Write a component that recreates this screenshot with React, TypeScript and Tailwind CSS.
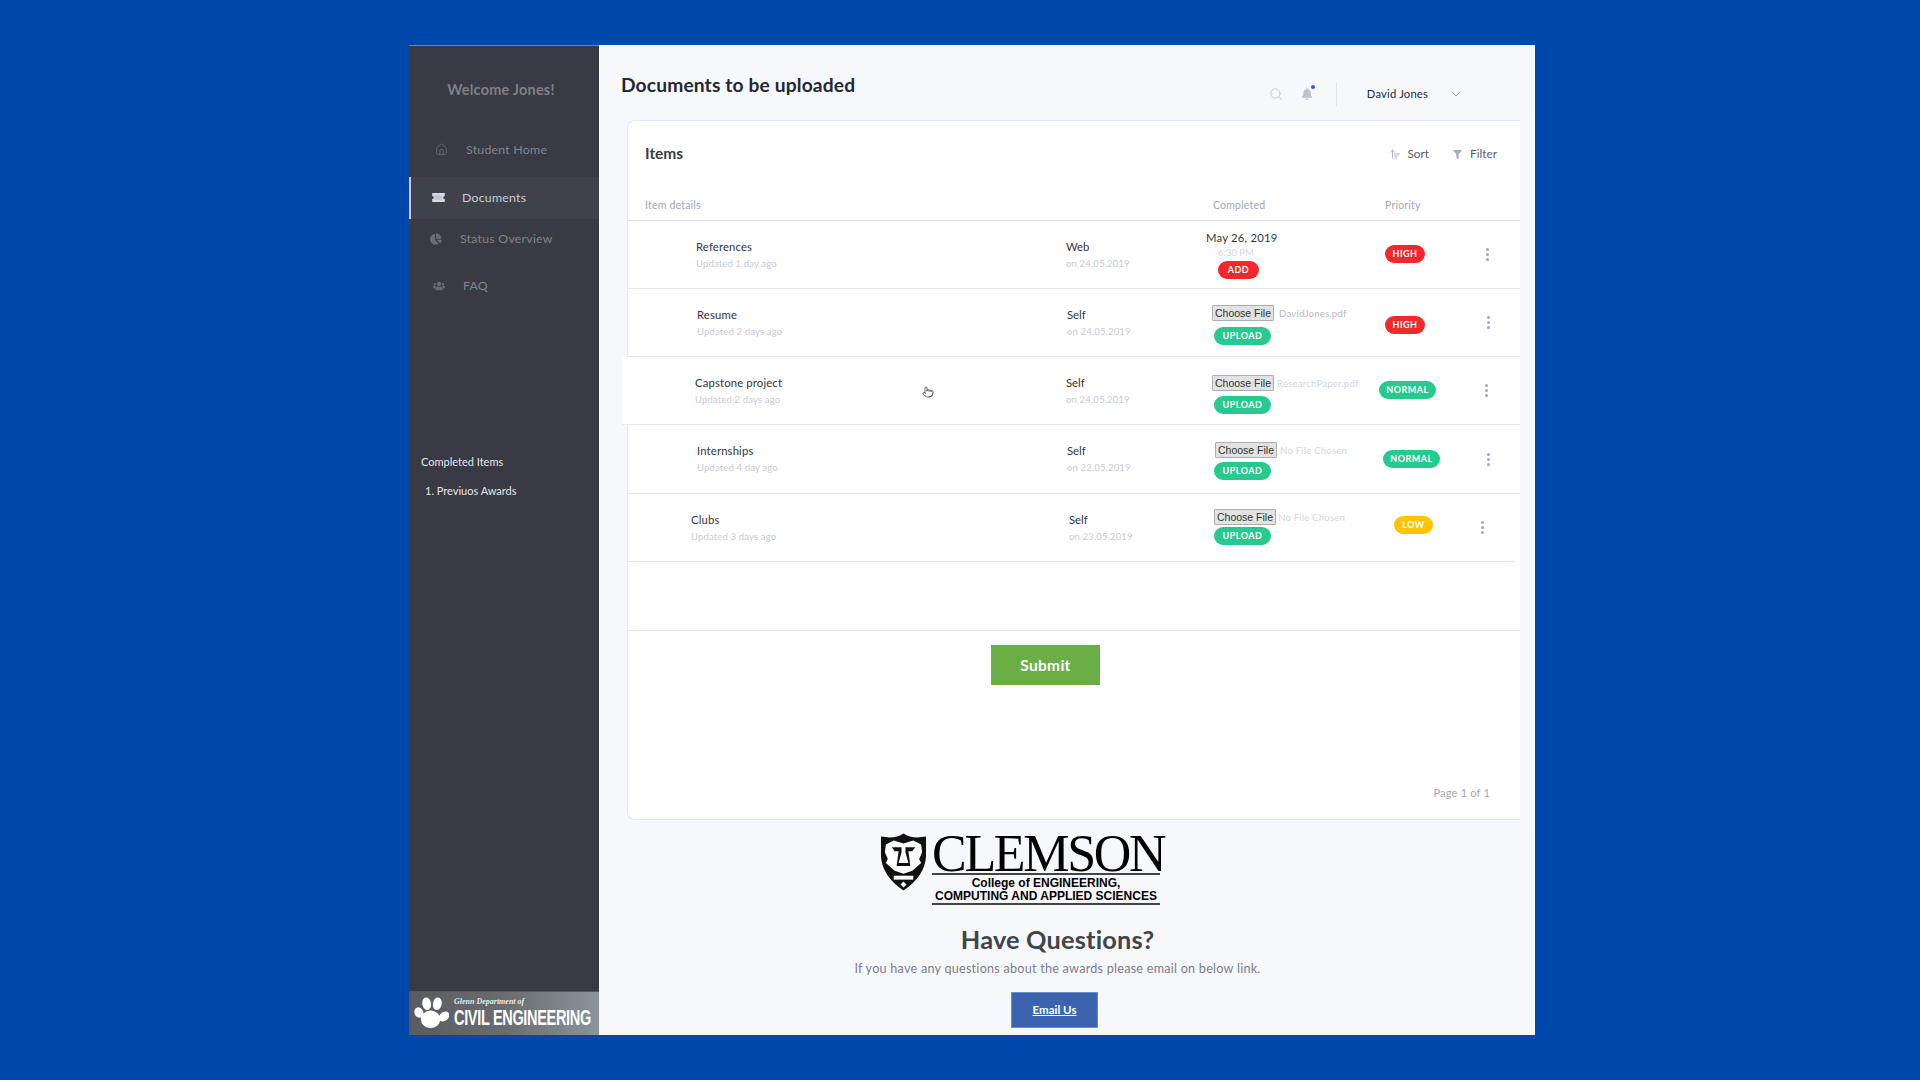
import { House, Search, ChevronDown, ArrowUpWideNarrow, Pointer } from "lucide-react";
import { FaChartPie, FaUsers, FaBell, FaFilter } from "react-icons/fa";

type Row = {
  name: string; sub: string; src: string; on: string;
  rowCls: string; nameCol: string; srcCol: string; midCol: string;
  file?: string; fileCls?: string; chooseCls?: string; uploadCls?: string;
  pri: string; priCls: string; priCol: string; dots: string;
};

const rows: Row[] = [
  { name: "References", sub: "Updated 1 day ago", src: "Web", on: "on 24.05.2019", rowCls: "h-[68px]", nameCol: "w-[438px] pl-[68px]", srcCol: "w-[140px]", midCol: "w-[179px] pt-[10px]", pri: "HIGH", priCls: "w-[40px] bg-[#f2282d]", priCol: "-mt-[2px]", dots: "ml-[61px]" },
  { name: "Resume", sub: "Updated 2 days ago", src: "Self", on: "on 24.05.2019", rowCls: "h-[68px]", nameCol: "w-[439px] pl-[69px]", srcCol: "w-[145px]", midCol: "w-[173px] pt-[16px]", file: "DavidJones.pdf", fileCls: "ml-[5px] text-[#b9bac6]", chooseCls: "", uploadCls: "ml-[2px] mt-[6px]", pri: "HIGH", priCls: "w-[40px] bg-[#f2282d]", priCol: "mt-[4px]", dots: "ml-[62px]" },
  { name: "Capstone project", sub: "Updated 2 days ago", src: "Self", on: "on 24.05.2019", rowCls: "h-[68px]", nameCol: "w-[438px] pl-[67px]", srcCol: "w-[146px]", midCol: "w-[167px] pt-[18px]", file: "ResearchPaper.pdf", fileCls: "ml-[3px] text-[#d5d6de]", chooseCls: "", uploadCls: "ml-[2px] mt-[5px]", pri: "NORMAL", priCls: "w-[57px] bg-[#27c98f]", priCol: "-mt-[2px]", dots: "ml-[49px]" },
  { name: "Internships", sub: "Updated 4 day ago", src: "Self", on: "on 22.05.2019", rowCls: "h-[69px]", nameCol: "w-[439px] pl-[69px]", srcCol: "w-[147px]", midCol: "w-[169px] pt-[17px]", file: "No File Chosen", fileCls: "ml-[3px] text-[#d5d6de]", chooseCls: "ml-[1px]", uploadCls: "mt-[4px]", pri: "NORMAL", priCls: "w-[57px] bg-[#27c98f]", priCol: "", dots: "ml-[47px]" },
  { name: "Clubs", sub: "Updated 3 days ago", src: "Self", on: "on 23.05.2019", rowCls: "h-[68px]", nameCol: "w-[441px] pl-[63px]", srcCol: "w-[145px]", midCol: "w-[180px] pt-[15px]", file: "No File Chosen", fileCls: "ml-[2px] text-[#d5d6de]", chooseCls: "", uploadCls: "mt-[2px]", pri: "LOW", priCls: "w-[39px] bg-[#ffc400]", priCol: "-mt-[6px]", dots: "ml-[48px]" },
];

function Dots() {
  return (
    <div className="flex flex-col gap-[2px]">
      <span className="w-[3px] h-[3px] rounded-full bg-[#a5a7b4]" />
      <span className="w-[3px] h-[3px] rounded-full bg-[#a5a7b4]" />
      <span className="w-[3px] h-[3px] rounded-full bg-[#a5a7b4]" />
    </div>
  );
}

function Pill({ text, cls }: { text: string; cls: string }) {
  return (
    <span className={`h-[18px] rounded-full flex items-center justify-center text-white text-[9px] font-bold tracking-[0.5px] ${cls}`}>
      {text}
    </span>
  );
}

function Paw() {
  return (
    <svg viewBox="0 0 36 34" className="w-[35px] h-[33px] shrink-0" fill="#ffffff">
      <ellipse cx="17" cy="23" rx="10" ry="9" />
      <ellipse cx="5" cy="16" rx="4.500" ry="5.500" transform="rotate(-25 5 16)" />
      <ellipse cx="13" cy="7" rx="4.500" ry="6.500" transform="rotate(-10 13 7)" />
      <ellipse cx="24" cy="7" rx="4.500" ry="6.500" transform="rotate(10 24 7)" />
      <ellipse cx="31" cy="20" rx="4.500" ry="6" transform="rotate(50 31 20)" />
    </svg>
  );
}

function Shield() {
  return (
    <svg viewBox="0 0 48 60" className="w-[47px] h-[60px] shrink-0">
      <path d="M1 4 L10 5 Q18 5 24 1 Q30 5 38 5 L47 4 L47 24 Q46 44 24 59 Q2 44 1 24 Z" fill="#111" />
      <path d="M6 12 L14 8 L24 11 L34 8 L42 12 L43 20 L40 27 L42 31 L33 39 L24 42 L15 39 L6 31 L8 27 L5 20 Z" fill="#fff" />
      <path d="M12 15 L22 15 L22 20 L19 31 L29 31 L26 20 L26 15 L36 15 L33 19 L29 19 L31 34 L17 34 L19 19 L15 19 Z" fill="#111" />
      <rect x="14" y="44" width="20" height="4" fill="#fff" />
      <path d="M24 50 L27 53 L24 56 L21 53 Z" fill="#fff" />
    </svg>
  );
}

export default function App() {
  return (
    <div className="w-[1920px] h-[1080px] bg-[#0047ab] pt-[45px] pl-[409px] font-['Lato',sans-serif] overflow-hidden">
      <div className="w-[1126px] h-[990px] flex">
        {/* Sidebar */}
        <aside className="w-[190px] h-full bg-[#393a43] border-t border-[#7d8190] flex flex-col">
          <div className="mt-[33px] text-center text-[14.5px] font-bold text-[#7e7f89] pr-[6px] tracking-[0.2px]">Welcome Jones!</div>
          <div className="mt-[39px] flex items-center h-[20px] pl-[26px] gap-[18px] text-[12.3px] text-[#83848e] tracking-[0.25px]">
            <House size={13} className="text-[#6b6c76]" strokeWidth={1.5} />
            <span>Student Home</span>
          </div>
          <div className="mt-[17px] h-[42px] flex items-center bg-[#40424b] border-l-2 border-[#c6cbe6] pl-[21px] gap-[17px] text-[12.3px] text-[#c9cbd6] tracking-[0.25px]">
            <svg viewBox="0 0 14 10" className="w-[13px] h-[9px]" fill="#d6d8e6">
              <path d="M0 0h14v3.200a1.800 1.800 0 0 0 0 3.600V10H0V6.800a1.800 1.800 0 0 0 0-3.600Z" />
              <rect x="3" y="2.500" width="8" height="5" fill="#c2c4d4" />
            </svg>
            <span>Documents</span>
          </div>
          <div className="mt-[10px] h-[20px] flex items-center pl-[21px] gap-[18px] text-[12.3px] text-[#83848e] tracking-[0.25px]">
            <FaChartPie size={12} className="text-[#6b6c76]" />
            <span>Status Overview</span>
          </div>
          <div className="mt-[27px] h-[20px] flex items-center pl-[24px] gap-[18px] text-[12.3px] text-[#83848e] tracking-[0.25px]">
            <FaUsers size={12} className="text-[#6b6c76]" />
            <span>FAQ</span>
          </div>
          <div className="mt-[158px] pl-[12px] text-[11px] text-[#e4e5ea]">Completed Items</div>
          <div className="mt-[13px] pl-[16px] text-[11px] text-[#e4e5ea]">1. Previuos Awards</div>
          <div className="mt-auto h-[44px] border-t border-[#555761] bg-gradient-to-r from-[#5a5b5e] via-[#6a6d70] to-[#8b949c] flex items-center pl-[5px] gap-[5px] overflow-hidden">
            <Paw />
            <div className="flex flex-col leading-none text-white">
              <span className="text-[8px] italic font-bold font-['Liberation_Serif',serif] text-[#e8e8e8] mb-[1px]">Glenn Department of</span>
              <span className="text-[22px] font-bold font-['Liberation_Sans',sans-serif] tracking-[-0.5px] origin-left scale-x-[0.66] whitespace-nowrap w-[136px]">CIVIL ENGINEERING</span>
            </div>
          </div>
        </aside>

        {/* Main */}
        <main className="w-[936px] h-full bg-[#f7f8fc] pl-[22px] pr-[15px] flex flex-col overflow-hidden">
          <header className="h-[75px] flex items-start">
            <h1 className="mt-[28px] text-[19.2px] font-bold text-[#252733] tracking-[0.15px] leading-[24px]">Documents to be uploaded</h1>
            <div className="ml-auto mt-[37px] flex items-center h-[24px] pr-[56px]">
              <Search size={14} className="text-[#c0c2cc]" strokeWidth={1.5} />
              <div className="relative ml-[18px]">
                <FaBell size={12} className="text-[#c0c2cc]" />
                <span className="absolute -top-[3px] right-[-2px] w-[4px] h-[4px] rounded-full bg-[#3751ff]" />
              </div>
              <div className="ml-[23px] w-px h-[24px] bg-[#e2e3ea]" />
              <span className="ml-[30px] text-[11.2px] text-[#252733] tracking-[0.2px]">David Jones</span>
              <ChevronDown size={16} strokeWidth={1.4} className="ml-[20px] text-[#a5a7b4]" />
            </div>
          </header>

          <section className="w-[893px] ml-[6px] h-[700px] bg-white border border-r-0 border-[#e6e7f0] rounded-l-[8px] flex flex-col relative shrink-0">
            <div className="h-[57px] flex items-end pl-[17px] pr-[23px] pb-[15px]">
              <h2 className="text-[15.5px] font-bold text-[#3a3b45] leading-[20px]">Items</h2>
              <div className="ml-auto flex items-center gap-[24px] text-[11.8px] text-[#5a5c6e]">
                <span className="flex items-center gap-[6px]"><ArrowUpWideNarrow size={12} className="text-[#b5b7c2]" />Sort</span>
                <span className="flex items-center gap-[8px]"><FaFilter size={9} className="text-[#a9abb8]" />Filter</span>
              </div>
            </div>
            <div className="h-[43px] flex items-center border-b border-[#dfe0eb] pt-[14px] text-[10.5px] text-[#a4a6b3] tracking-[0.2px]">
              <span className="w-[585px] pl-[17px]">Item details</span>
              <span className="w-[172px]">Completed</span>
              <span>Priority</span>
            </div>

            {rows.map((r, i) => (
              <div key={r.name} className={`${r.rowCls} ${i === 2 ? "relative -ml-[6px] pl-[6px] w-[898px] bg-white" : ""} flex items-center border-b border-[#e6e7f0] ${i === 4 ? "w-[887px]" : ""}`}>
                <div className={`${r.nameCol} shrink-0`}>
                  <div className="text-[11.3px] text-[#33343f] tracking-[0.15px] leading-[14px]">{r.name}</div>
                  <div className="mt-[4px] text-[9.5px] text-[#c9cad3] tracking-[0.15px] leading-[12px]">{r.sub}</div>
                </div>
                <div className={`${r.srcCol} shrink-0`}>
                  <div className="text-[11.3px] text-[#33343f] leading-[14px]">{r.src}</div>
                  <div className="mt-[4px] text-[9.5px] text-[#c9cad3] tracking-[0.15px] leading-[12px]">{r.on}</div>
                </div>
                <div className={`${r.midCol} shrink-0 self-start flex flex-col`}>
                  {r.file ? (
                    <>
                      <div className={`flex items-center ${r.chooseCls}`}>
                        <span className="w-[62px] h-[16px] shrink-0 border border-[#adadad] bg-[#e2e2e2] rounded-[1px] font-['Liberation_Sans',sans-serif] text-[10.5px] leading-[14px] text-center text-[#333]">Choose File</span>
                        <span className={`${r.fileCls} text-[9.7px] tracking-[0.15px] whitespace-nowrap`}>{r.file}</span>
                      </div>
                      <span className={`${r.uploadCls} inline-flex`}>
                        <Pill text="UPLOAD" cls="w-[57px] bg-[#27c98f]" />
                      </span>
                    </>
                  ) : (
                    <>
                      <span className="text-[11.3px] text-[#33343f] tracking-[0.2px] leading-[14px]">May 26, 2019</span>
                      <span className="pl-[12px] text-[9.5px] text-[#d5d6dd] leading-[12px] mt-[2px]">6:30 PM</span>
                      <span className="mt-[2px] ml-[12px] inline-flex"><Pill text="ADD" cls="w-[41px] bg-[#f2282d]" /></span>
                    </>
                  )}
                </div>
                <div className={`shrink-0 ${r.priCol}`}><Pill text={r.pri} cls={r.priCls} /></div>
                <div className={`shrink-0 ${r.dots}`}><Dots /></div>
                {i === 2 && <Pointer size={12} strokeWidth={1.4} className="absolute left-[300px] top-[29px] text-[#333]" />}
              </div>
            ))}

            <div className="h-[69px] border-b border-[#e6e7f0]" />
            <div className="mt-[14px] flex ml-[363px]">
              <button className="w-[109px] h-[40px] pt-[2px] bg-[#6aae45] text-white text-[15.5px] font-bold tracking-[0.3px]">Submit</button>
            </div>
            <div className="mt-auto mb-[18px] pr-[30px] text-right text-[11px] text-[#a4a6b3] tracking-[0.2px]">Page 1 of 1</div>
          </section>

          <div className="mt-[12px] ml-[259px] flex items-start gap-[5px] h-[74px] shrink-0">
            <Shield />
            <div className="w-[236px] pt-[2px] flex flex-col">
              <span className="font-['Liberation_Serif',serif] text-[52px] leading-[40px] text-black tracking-[-2.300px] whitespace-nowrap h-[39px]">CLEMSON</span>
              <div className="w-[228px] h-[2px] bg-[#444]" />
              <div className="w-[228px] mt-[2px] flex justify-center font-['Liberation_Sans',sans-serif] font-bold text-black text-[12.5px] leading-[13px] whitespace-nowrap scale-x-[0.96]">College of ENGINEERING,</div>
              <div className="w-[228px] flex justify-center font-['Liberation_Sans',sans-serif] font-bold text-black text-[12.5px] leading-[13px] whitespace-nowrap scale-x-[0.96]">COMPUTING AND APPLIED SCIENCES</div>
              <div className="w-[228px] h-[2px] bg-[#444]" />
            </div>
          </div>

          <div className="ml-[6px] w-[893px] flex flex-col items-center pr-[32px]">
            <h3 className="mt-[18px] text-[25.3px] font-bold text-[#3f4548] leading-[30px] tracking-[0.2px]">Have Questions?</h3>
            <p className="mt-[6px] text-[12.6px] text-[#7b7d87] tracking-[0.25px] leading-[18px]">If you have any questions about the awards please email on below link.</p>
            <a className="mt-[14px] w-[87px] h-[36px] -ml-[6px] bg-[#3c64ae] border border-[#6a8ccb] text-white text-[11.5px] font-bold underline flex items-center justify-center">Email Us</a>
          </div>
        </main>
      </div>
    </div>
  );
}
